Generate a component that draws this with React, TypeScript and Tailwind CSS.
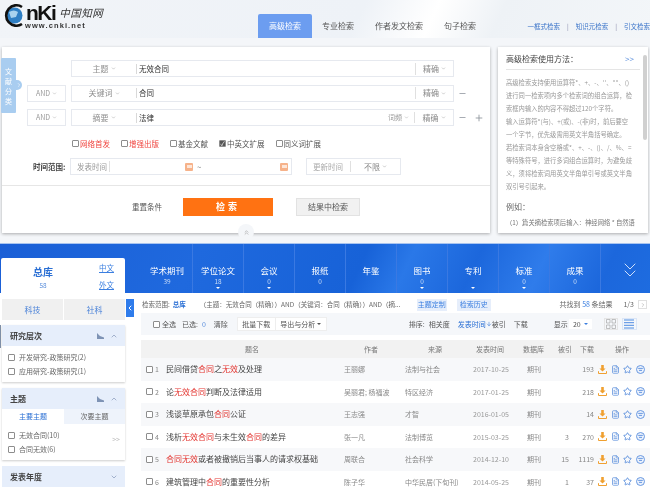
import { ArrowDown, ChevronDown, ChevronLeft, ChevronRight, ChevronUp, ChevronsDown, ChevronsUp, FileText, Minus, Plus, Star } from 'lucide-react';

const helpLines = [
  '高级检索支持使用运算符*、+、-、\'\'、""、()',
  '进行同一检索项内多个检索词的组合运算，检',
  '索框内输入的内容不得超过120个字符。',
  '输入运算符*(与)、+(或)、-(非)时，前后要空',
  '一个字节，优先级需用英文半角括号确定。',
  '若检索词本身含空格或*、+、-、()、/、%、=',
  '等特殊符号，进行多词组合运算时，为避免歧',
  '义，须将检索词用英文半角单引号或英文半角',
  '双引号引起来。',
];

const navItems = [
  { name: '学术期刊', count: '39', caret: false },
  { name: '学位论文', count: '18', caret: true },
  { name: '会议', count: '0', caret: true },
  { name: '报纸', count: '0', caret: false },
  { name: '年鉴', count: '', caret: false },
  { name: '图书', count: '0', caret: true },
  { name: '专利', count: '', caret: true },
  { name: '标准', count: '0', caret: true },
  { name: '成果', count: '0', caret: false },
];

const rows = [
  { title: '民间借贷合同之无效及处理', author: '王丽娜', source: '法制与社会', date: '2017-10-25', cited: '', downloads: '193' },
  { title: '论无效合同判断及法律适用', author: '吴丽君; 杨福波', source: '特区经济', date: '2017-01-25', cited: '', downloads: '218' },
  { title: '浅谈草原承包合同公证', author: '王志强', source: '才智', date: '2016-01-05', cited: '', downloads: '14' },
  { title: '浅析无效合同与未生效合同的差异', author: '张一凡', source: '法制博览', date: '2015-03-25', cited: '3', downloads: '270' },
  { title: '合同无效或者被撤销后当事人的请求权基础', author: '周联合', source: '社会科学', date: '2014-12-10', cited: '15', downloads: '1119' },
  { title: '建筑管理中合同的重要性分析', author: '陈子华', source: '中华民居(下旬刊)', date: '2014-05-25', cited: '1', downloads: '37' },
];

function Highlight({ text }: { text: string }) {
  return (
    <>
      {text.split(/(合同|无效)/).map((part, i) =>
        part === '合同' || part === '无效' ? (
          <span key={i} className="text-[#e3342f]">{part}</span>
        ) : (
          <span key={i}>{part}</span>
        ),
      )}
    </>
  );
}

function Box({ checked = false }: { checked?: boolean }) {
  return (
    <span className={`inline-flex h-[7px] w-[7px] shrink-0 items-center justify-center rounded-[1px] border border-[#8d8d8d] ${checked ? 'bg-[#555]' : 'bg-white'}`}>
      {checked && <span className="text-[6px] leading-none text-white">✓</span>}
    </span>
  );
}

function SearchRow({ op, field, value, extra, minus, plus }: { op?: string; field: string; value: string; extra?: boolean; minus?: boolean; plus?: boolean }) {
  return (
    <div className="flex h-[17px] items-center">
      <div className="w-[44px] shrink-0">
        {op && (
          <div className="flex h-[17px] w-[39px] items-center justify-center gap-[2px] border border-[#e6e9ef] text-[7px] text-[#9a9a9a]">
            {op}
            <ChevronDown size={5} />
          </div>
        )}
      </div>
      <div className="flex h-[17px] w-[383px] items-center border border-[#e6e9ef]">
        <div className="flex w-[64px] items-center justify-center gap-[2px] text-[8px] text-[#8f8f8f]">
          {field}
          <ChevronDown size={5} />
        </div>
        <div className="h-[10px] w-px bg-[#d9d9d9]" />
        <div className="flex-1 pl-[2px] text-[7.5px] text-[#333]">{value}</div>
        {extra && (
          <div className="flex w-[32px] items-center justify-center gap-[2px] border-r border-[#e0e0e0] text-[7px] text-[#999]">
            词频
            <ChevronDown size={5} />
          </div>
        )}
        <div className={`flex w-[38px] items-center justify-center gap-[2px] text-[8px] text-[#8c8c8c] ${extra ? '' : 'border-l border-[#e0e0e0]'}`}>
          精确
          <ChevronDown size={5} />
        </div>
      </div>
      <div className="flex w-[30px] items-center gap-[7px] pl-[4px] text-[#8a9099]">
        {minus && <Minus size={9} strokeWidth={2} />}
        {plus && <Plus size={10} strokeWidth={2} />}
      </div>
    </div>
  );
}

function Option({ label, red, checked }: { label: string; red?: boolean; checked?: boolean }) {
  return (
    <label className={`flex items-center gap-[1px] text-[7.5px] ${red ? 'text-[#f0443e]' : 'text-[#555]'}`}>
      <Box checked={checked} />
      {label}
    </label>
  );
}

function DateIcon() {
  return (
    <span className="flex h-[8px] w-[8px] items-center justify-center rounded-[1px] bg-[#f6b28a]">
      <span className="h-[3px] w-[5px] bg-[#fde6d8]" />
    </span>
  );
}

function ChartIcon() {
  return (
    <svg width="7" height="6" viewBox="0 0 7 6">
      <path d="M0 6V0L3 3L7 4.5V6Z" fill="#7e93b5" />
    </svg>
  );
}

function FacetHead({ title, open = true }: { title: string; open?: boolean }) {
  return (
    <div className="flex h-[21px] items-center justify-between bg-[#e6eefb] pl-[8px] pr-[7px] text-[8px] font-bold text-[#444]">
      {title}
      <span className="flex items-center gap-[6px] text-[#7e93b5]">
        {open && <ChartIcon />}
        {open ? <ChevronUp size={8} /> : <ChevronDown size={8} />}
      </span>
    </div>
  );
}

function FacetOption({ label }: { label: string }) {
  return (
    <div className="flex h-[10px] items-center gap-[4px] text-[7px] text-[#666]">
      <Box />
      {label}
    </div>
  );
}

function DownloadIcon() {
  return (
    <svg width="9" height="9" viewBox="0 0 9 9" className="shrink-0">
      <path d="M3.2 0H5.8V3.4H7.6L4.5 6.6L1.4 3.4H3.2Z" fill="#f0a030" />
      <path d="M0.5 6.2V8.5H8.5V6.2" fill="none" stroke="#f0a030" strokeWidth="1" />
    </svg>
  );
}

function CiteIcon() {
  return (
    <svg width="9" height="9" viewBox="0 0 9 9" className="shrink-0">
      <circle cx="4.5" cy="4.5" r="4" fill="#eaf1fc" stroke="#5b8fdc" strokeWidth="0.9" />
      <path d="M2.2 3.4H6.8M3 5.4H6" stroke="#5b8fdc" strokeWidth="0.9" />
    </svg>
  );
}

function GridIcon() {
  return (
    <svg width="10" height="10" viewBox="0 0 10 10">
      <path d="M0.5 0.5H4V4H0.5ZM6 0.5H9.5V4H6ZM0.5 6H4V9.5H0.5ZM6 6H9.5V9.5H6Z" fill="none" stroke="#a8a8a8" strokeWidth="0.7" />
    </svg>
  );
}

function ListIcon() {
  return (
    <svg width="10" height="10" viewBox="0 0 10 10">
      <path d="M0 1H10M0 3.7H10M0 6.3H10M0 9H10" stroke="#3b7fe0" strokeWidth="0.9" />
    </svg>
  );
}

export default function App() {
  return (
    <div className="h-[491px] w-[650px] overflow-hidden bg-white font-['Noto_Sans_CJK_SC','Noto_Sans',sans-serif] blur-[0.35px]">
      {/* header */}
      <div className="flex h-[38px] bg-[linear-gradient(115deg,#f1f4f8_0%,#eef2f7_55%,#ffffff_66%,#eef2f6_76%,#f3f6f9_100%)]">
        <div className="flex w-[258px] items-start pl-[3px] pt-[4px]">
          <svg width="23" height="23" viewBox="0 0 23 23" className="shrink-0">
            <circle cx="11.5" cy="11.5" r="8" fill="#2f7fc4" />
            <path d="M6 8 Q11 5 15 8 L13 13 L8 14 Z" fill="#a8d2ee" />
            <path d="M19 3 A10.2 10.2 0 1 0 19 20" fill="none" stroke="#111" strokeWidth="2.6" />
          </svg>
          <div className="flex flex-col">
            <div className="flex h-[17px] items-center">
              <span className="font-['Liberation_Sans',sans-serif] text-[21px] font-bold leading-[16px] tracking-[-1.5px] text-[#111]">nKi</span>
              <span className="ml-[4px] font-['Noto_Sans_CJK_SC',serif] text-[10.5px] italic leading-[14px] tracking-[0.5px] text-[#333]">中国知网</span>
            </div>
            <span className="-ml-[1px] mt-[1px] whitespace-nowrap font-['Liberation_Sans',sans-serif] text-[7.5px] font-bold leading-[8px] tracking-[1.1px] text-[#333]">www.cnki.net</span>
          </div>
        </div>
        <div className="flex items-end">
          <div className="flex h-[24px] w-[54px] items-center justify-center rounded-t-[2px] bg-[#6c9df0] text-[8px] text-white">高级检索</div>
          <div className="flex h-[24px] gap-[21px] pl-[10px] text-[8px] leading-[24px] text-[#555]">
            <span>专业检索</span>
            <span>作者发文检索</span>
            <span>句子检索</span>
          </div>
        </div>
        <div className="ml-auto flex items-center gap-[7px] pt-[16px] text-[6.5px] text-[#3b74c9]">
          <span>一框式检索</span>
          <span className="text-[#88a]">|</span>
          <span>知识元检索</span>
          <span className="text-[#88a]">|</span>
          <span className="whitespace-nowrap">引文检索</span>
        </div>
      </div>

      {/* search area */}
      <div className="flex h-[205px] gap-[8px] bg-[#f4f6f9] pl-[2px] pt-[9px]">
        <div className="relative h-[186px] w-[488px] bg-white shadow-[0_1px_3px_rgba(0,0,0,0.3)]">
          <div className="absolute left-[-1px] top-[11px] flex h-[55px] w-[15px] items-center justify-center rounded-[1px] bg-[#a9cdf0] text-center text-[7px] leading-[10px] text-white">
            文<br />献<br />分<br />类
          </div>
          <span className="absolute left-[14px] top-[33px] flex h-[10px] w-[6px] items-center rounded-r-full bg-[#a9cdf0] text-white">
            <ChevronRight size={6} />
          </span>
          <div className="flex flex-col gap-[7.5px] pl-[25px] pt-[13px]">
            <SearchRow field="主题" value="无效合同" />
            <SearchRow op="AND" field="关键词" value="合同" minus />
            <SearchRow op="AND" field="摘要" value="法律" extra minus plus />
          </div>
          <div className="flex gap-[11px] pl-[70px] pt-[12px]">
            <Option label="网络首发" red />
            <Option label="增强出版" red />
            <Option label="基金文献" />
            <Option label="中英文扩展" checked />
            <Option label="同义词扩展" />
          </div>
          <div className="flex items-center pl-[31px] pt-[9px]">
            <span className="w-[37px] text-[7.5px] font-bold text-[#444]">时间范围:</span>
            <div className="flex h-[17px] w-[222px] items-center border border-[#e6e9ef] pl-[6px] text-[7.5px] text-[#999]">
              <span className="w-[33px] border-r border-[#e0e0e0]">发表时间</span>
              <span className="ml-[75px]"><DateIcon /></span>
              <span className="ml-[4px] text-[#777]">~</span>
              <span className="ml-[79px]"><DateIcon /></span>
            </div>
            <div className="ml-[14px] flex h-[17px] w-[95px] items-center border border-[#e6e9ef] pl-[6px] text-[7.5px] text-[#aaa]">
              <span className="w-[38px] whitespace-nowrap border-r border-[#e0e0e0]">更新时间</span>
              <span className="flex flex-1 items-center justify-center gap-[2px] text-[8px] text-[#888]">不限<ChevronDown size={5} /></span>
            </div>
          </div>
          <div className="mt-[10px] flex h-[46px] items-center justify-start border-t border-[#e6e6e6] pb-[4px]">
            <span className="ml-[130px] text-[7.5px] text-[#555]">重置条件</span>
            <button type="button" className="ml-[21px] h-[18px] w-[90px] bg-[#ff7212] text-[9px] font-bold tracking-[3px] text-white">检索</button>
            <button type="button" className="ml-[23px] h-[18px] w-[64px] border border-[#e2e2e2] bg-[#f1f1f1] text-[8px] text-[#555]">结果中检索</button>
          </div>
          <span className="absolute bottom-[-7px] left-[236px] flex h-[16px] w-[16px] items-center justify-center rounded-full bg-[#f4f6f9] text-[#999]">
            <ChevronsUp size={7} />
          </span>
        </div>
        <div className="relative h-[186px] w-[150px] bg-white px-[8px] pt-[5px] shadow-[0_1px_3px_rgba(0,0,0,0.3)]">
          <div className="flex h-[18px] items-center justify-between border-b border-[#e5e5e5] pb-[3px] pr-[6px] text-[8px] text-[#444]">
            高级检索使用方法：
            <span className="text-[#5b8fdc]">&gt;&gt;</span>
          </div>
          <div className="pt-[6px] text-[6.3px] leading-[13px] text-[#999]">
            {helpLines.map((line) => (
              <div key={line} className="whitespace-nowrap">{line}</div>
            ))}
          </div>
          <div className="pt-[8px] text-[8px] text-[#666]">例如：</div>
          <div className="whitespace-nowrap pt-[5px] text-[6.3px] text-[#777]">（1）篇关摘检索项后输入：神经网络 * 自然语</div>
          <span className="absolute right-[1px] top-[8px] h-[85px] w-[4px] rounded-full bg-[#d0d0d0]" />
        </div>
      </div>

      {/* database band */}
      <div className="relative flex h-[50px] items-end border-t border-[#a9c4ef] bg-[#1e68dd] bg-[linear-gradient(115deg,#1a5fd6_0%,#1f69de_30%,#1762d8_55%,#2a78e8_62%,#1c67dc_72%,#2f7ceb_82%,#1c67dc_92%,#1e6ce0_100%)] pl-[1px]">
        <div className="flex h-[35px] w-[124px] items-center rounded-t-[2px] bg-white">
          <div className="flex w-[84px] flex-col items-center pt-[6px]">
            <span className="text-[10px] font-bold leading-[14px] text-[#2a6fd4]">总库</span>
            <span className="text-[6.5px] leading-[13px] text-[#5b8fdc]">58</span>
          </div>
          <div className="flex flex-col gap-[6px] pl-[14px] text-[7.5px] leading-[11px] text-[#3b7fe0] underline">
            <span>中文</span>
            <span>外文</span>
          </div>
        </div>
        <div className="flex h-full flex-1 pl-[17px]">
          {navItems.map((item) => (
            <div key={item.name} className="flex h-full w-[51px] flex-col items-center border-r border-[#3a79e2] pt-[21px] text-white last:border-r-0">
              <span className="text-[8.5px] leading-[11px]">{item.name}</span>
              <span className="mt-[1px] h-[9px] text-[6.5px] leading-[9px] text-[#c9dcf8]">{item.count}</span>
              {item.caret && <span className="mt-[1px] h-0 w-0 border-x-[2px] border-t-[2px] border-x-transparent border-t-white" />}
            </div>
          ))}
          <div className="flex h-full flex-1 items-center justify-center pl-[8px] pt-[2px] text-[#cfe0fa]">
            <ChevronsDown size={24} strokeWidth={1} />
          </div>
        </div>
      </div>

      {/* results */}
      <div className="flex">
        <div className="relative w-[125px] shrink-0 pl-[2px] pt-[6px]">
          <div className="flex h-[21px] w-[123px] gap-[1px] text-[8px] text-[#4a82d8]">
            <div className="flex flex-1 items-center justify-center bg-[#f0f0f0]">科技</div>
            <div className="flex flex-1 items-center justify-center bg-[#f0f0f0]">社科</div>
          </div>
          <div className="mt-[5px] h-[57px] w-[123px] shadow-[0_1px_2px_rgba(0,0,0,0.2)]">
            <FacetHead title="研究层次" />
            <div className="flex flex-col gap-[4.5px] pl-[6px] pt-[6px]">
              <FacetOption label="开发研究-政策研究(2)" />
              <FacetOption label="应用研究-政策研究(1)" />
            </div>
          </div>
          <span className="absolute left-0 top-[32px] h-[23px] w-[1px] bg-[#7f8fa6]" />
          <div className="mt-[6px] h-[72px] w-[123px] shadow-[0_1px_2px_rgba(0,0,0,0.2)]">
            <FacetHead title="主题" />
            <div className="flex h-[15px] text-[7px]">
              <div className="flex w-[62px] items-center justify-center bg-white text-[#2a6fd4]">主要主题</div>
              <div className="flex flex-1 items-center justify-center bg-[#eef3fb] text-[#666]">次要主题</div>
            </div>
            <div className="relative flex flex-col gap-[4.5px] pl-[6px] pt-[6px]">
              <FacetOption label="无效合同(10)" />
              <FacetOption label="合同无效(6)" />
              <span className="absolute right-[5px] top-[10px] text-[7px] text-[#bbb]">&gt;&gt;</span>
            </div>
          </div>
          <div className="mt-[6px] w-[123px]">
            <FacetHead title="发表年度" open={false} />
          </div>
          <span className="absolute left-[126px] top-[6px] flex h-[18px] w-[8px] items-center justify-center bg-[#2f7ceb] text-white">
            <ChevronLeft size={8} strokeWidth={3} />
          </span>
        </div>

        <div className="ml-[16px] flex-1">
          <div className="flex h-[20px] items-center whitespace-nowrap pl-[1px] pt-[3px] text-[6.5px] text-[#666]">
            <span>检索范围:</span>
            <span className="ml-[3px] font-bold text-[#2a6fd4]">总库</span>
            <span className="ml-[14px] w-[207px]">（主题：无效合同（精确））AND（关键词：合同（精确））AND（摘...</span>
            <span className="ml-[10px] flex h-[12px] w-[30px] items-center justify-center bg-[#e6eefb] text-[7px] text-[#3b7fe0]">主题定制</span>
            <span className="ml-[10px] flex h-[12px] w-[34px] items-center justify-center bg-[#e6eefb] text-[7px] text-[#3b7fe0]">检索历史</span>
            <span className="ml-auto text-[7px]">共找到 <span className="text-[#3b7fe0]">58</span> 条结果</span>
            <span className="ml-[11px] text-[7px]">1/3</span>
            <span className="ml-[4px] mr-[3px] flex h-[9px] w-[9px] items-center justify-center border border-[#e0e0e0] text-[#999]"><ChevronRight size={6} /></span>
          </div>
          <div className="flex h-[22px] items-center whitespace-nowrap bg-[#f5f7fa] pl-[12px] pr-[4px] text-[7px] text-[#555]">
            <Box />
            <span className="ml-[2px]">全选</span>
            <span className="ml-[6px]">已选:</span>
            <span className="ml-[4px] text-[#5b8fdc]">0</span>
            <span className="ml-[8px]">清除</span>
            <span className="ml-[9px] flex h-[14px] w-[39px] items-center justify-center border border-[#eee] bg-white">批量下载</span>
            <span className="flex h-[14px] w-[51px] items-center justify-center gap-[2px] border border-l-0 border-[#eee] bg-white">导出与分析<span className="h-0 w-0 border-x-[2px] border-t-[2px] border-x-transparent border-t-[#555]" /></span>
            <span className="ml-[82px]">排序:</span>
            <span className="ml-[4px]">相关度</span>
            <span className="ml-[8px] flex items-center text-[#2a6fd4]">发表时间<ArrowDown size={6} /></span>
            <span className="ml-[0px]">被引</span>
            <span className="ml-[8px]">下载</span>
            <span className="ml-[26px]">显示</span>
            <span className="ml-[1px] flex h-[10px] w-[23px] items-center justify-center gap-[3px] bg-white">20<span className="h-0 w-0 border-x-[2px] border-t-[2px] border-x-transparent border-t-[#3b7fe0]" /></span>
            <span className="ml-[12px] flex h-[12px] w-[14px] items-center justify-center border border-[#e5e5e5]"><GridIcon /></span>
            <span className="ml-[4px] flex h-[12px] w-[15px] items-center justify-center border border-[#dbe6f7]"><ListIcon /></span>
          </div>
          <div className="mt-[5px] text-[7px] text-[#777]">
            <div className="grid h-[18px] grid-cols-[203px_61px_68px_54px_28px_22px_1fr] items-center whitespace-nowrap bg-[#f2f2f2] pr-[3px]">
              <span className="pl-[19px] text-center">题名</span>
              <span className="pl-[20px]">作者</span>
              <span className="pl-[23px]">来源</span>
              <span className="pl-[3px]">发表时间</span>
              <span className="-ml-[4px]">数据库</span>
              <span className="pl-[3px]">被引</span>
              <span className="pl-[3px]">下载<span className="ml-[21px]">操作</span></span>
            </div>
            {rows.map((row, i) => (
              <div key={row.title} className={`grid h-[22.5px] grid-cols-[203px_61px_68px_54px_28px_22px_1fr] items-center whitespace-nowrap pr-[3px] ${i % 2 === 0 ? 'bg-[#f7f8fa]' : 'bg-white'}`}>
                <span className="flex items-center pl-[5px] text-[8px] text-[#444]">
                  <Box />
                  <span className="ml-[2px] w-[10px] text-[7px] text-[#888]">{i + 1}</span>
                  <span className="ml-[1px]"><Highlight text={row.title} /></span>
                </span>
                <span className="text-[#888]">{row.author}</span>
                <span className="text-[#888]">{row.source}</span>
                <span className="text-[#999]">{row.date}</span>
                <span className="text-[#888]">期刊</span>
                <span className="pr-[8px] text-right text-[#888]">{row.cited}</span>
                <span className="flex items-center">
                  <span className="w-[17px] text-right text-[#888]">{row.downloads}</span>
                  <span className="ml-[4px] flex items-center gap-[3.5px] text-[#5b8fdc]">
                    <DownloadIcon />
                    <FileText size={9} />
                    <Star size={9} strokeWidth={2.4} />
                    <CiteIcon />
                  </span>
                </span>
              </div>
            ))}
          </div>
        </div>
      </div>
    </div>
  );
}
